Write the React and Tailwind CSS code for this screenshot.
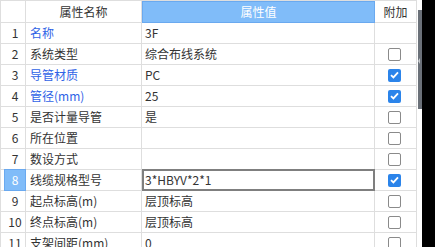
import React from "react";

const rows = [
  { n: 1, name: "名称", blue: true, value: "3F", cb: null },
  { n: 2, name: "系统类型", value: "综合布线系统", cb: false },
  { n: 3, name: "导管材质", blue: true, value: "PC", cb: true },
  { n: 4, name: "管径(mm)", blue: true, value: "25", cb: true },
  { n: 5, name: "是否计量导管", value: "是", cb: false },
  { n: 6, name: "所在位置", value: "", cb: false },
  { n: 7, name: "数设方式", value: "", cb: false },
  { n: 8, name: "线缆规格型号", value: "3*HBYV*2*1", cb: true, active: true },
  { n: 9, name: "起点标高(m)", value: "层顶标高", cb: false },
  { n: 10, name: "终点标高(m)", value: "层顶标高", cb: false },
  { n: 11, name: "支架间距(mm)", value: "0", cb: false },
];

function Checkbox({ checked }) {
  if (checked) {
    return (
      <div className="w-[13px] h-[13px] rounded-[2px] bg-[#2b84ea] flex items-center justify-center">
        <svg width="9" height="8" viewBox="0 0 9 8">
          <path d="M1 4.2 L3.4 6.4 L8 1.4" stroke="white" strokeWidth="1.8" fill="none" />
        </svg>
      </div>
    );
  }
  return <div className="w-[13px] h-[13px] rounded-[2px] border border-[#8a8a8a] bg-white" />;
}

export default function App() {
  return (
    <div
      className="w-[435px] h-[247px] overflow-hidden bg-black flex text-[12px] text-[#333333]"
      style={{ fontFamily: '"Noto Sans CJK SC", "Noto Sans", sans-serif' }}
    >
      <div className="w-[417px] shrink-0 bg-white border-l border-t border-[#dedede]">
        {/* header */}
        <div className="flex h-[22px] border-b border-[#dedede]">
          <div className="w-[25px] border-r border-[#dedede]" />
          <div className="w-[116px] border-r border-[#dedede] flex items-center justify-center">
            属性名称
          </div>
          <div className="w-[233px] border-r border-[#dedede] relative">
            <div className="absolute left-0 top-0 -right-px -bottom-px bg-[#80bcf9] border border-[#6aa9ef] flex items-center justify-center text-white">
              属性值
            </div>
          </div>
          <div className="w-[42px] border-r border-[#dedede] flex items-center justify-center">
            附加
          </div>
        </div>
        {rows.map((r) => (
          <div key={r.n} className="flex h-[21px] border-b border-[#dedede]">
            <div className="w-[25px] border-r border-[#dedede] relative flex items-center justify-center pl-[4px]">
              {r.active && (
                <div className="absolute left-[3px] -top-px -right-px -bottom-px bg-[#80bcf9] border border-[#6aa9ef]" />
              )}
              <span className={"relative " + (r.active ? "text-white" : "")}>{r.n}</span>
            </div>
            <div
              className={
                "w-[116px] border-r border-[#dedede] flex items-center pl-[4px] whitespace-nowrap " +
                (r.blue ? "text-[#2f63e6]" : "")
              }
            >
              {r.name}
            </div>
            <div className="w-[233px] border-r border-[#dedede] relative flex items-center pl-[3px] whitespace-nowrap">
              {r.active && (
                <div className="absolute left-0 -top-px -right-px -bottom-px border-2 border-[#7f7f7f]" />
              )}
              {r.value}
            </div>
            <div className="w-[42px] border-r border-[#dedede] flex items-center justify-center pr-[2px]">
              {r.cb !== null && <Checkbox checked={r.cb} />}
            </div>
          </div>
        ))}
      </div>
      <div className="w-[5px] shrink-0 bg-white">
        <div className="ml-px mt-[10px] w-[4px] h-[99px] bg-[#6b7179] relative">
          <div className="absolute left-0 top-[48px] w-0 h-0 border-y-[3px] border-y-transparent border-r-[2px] border-r-[#c9ccd0]" />
        </div>
      </div>
    </div>
  );
}
